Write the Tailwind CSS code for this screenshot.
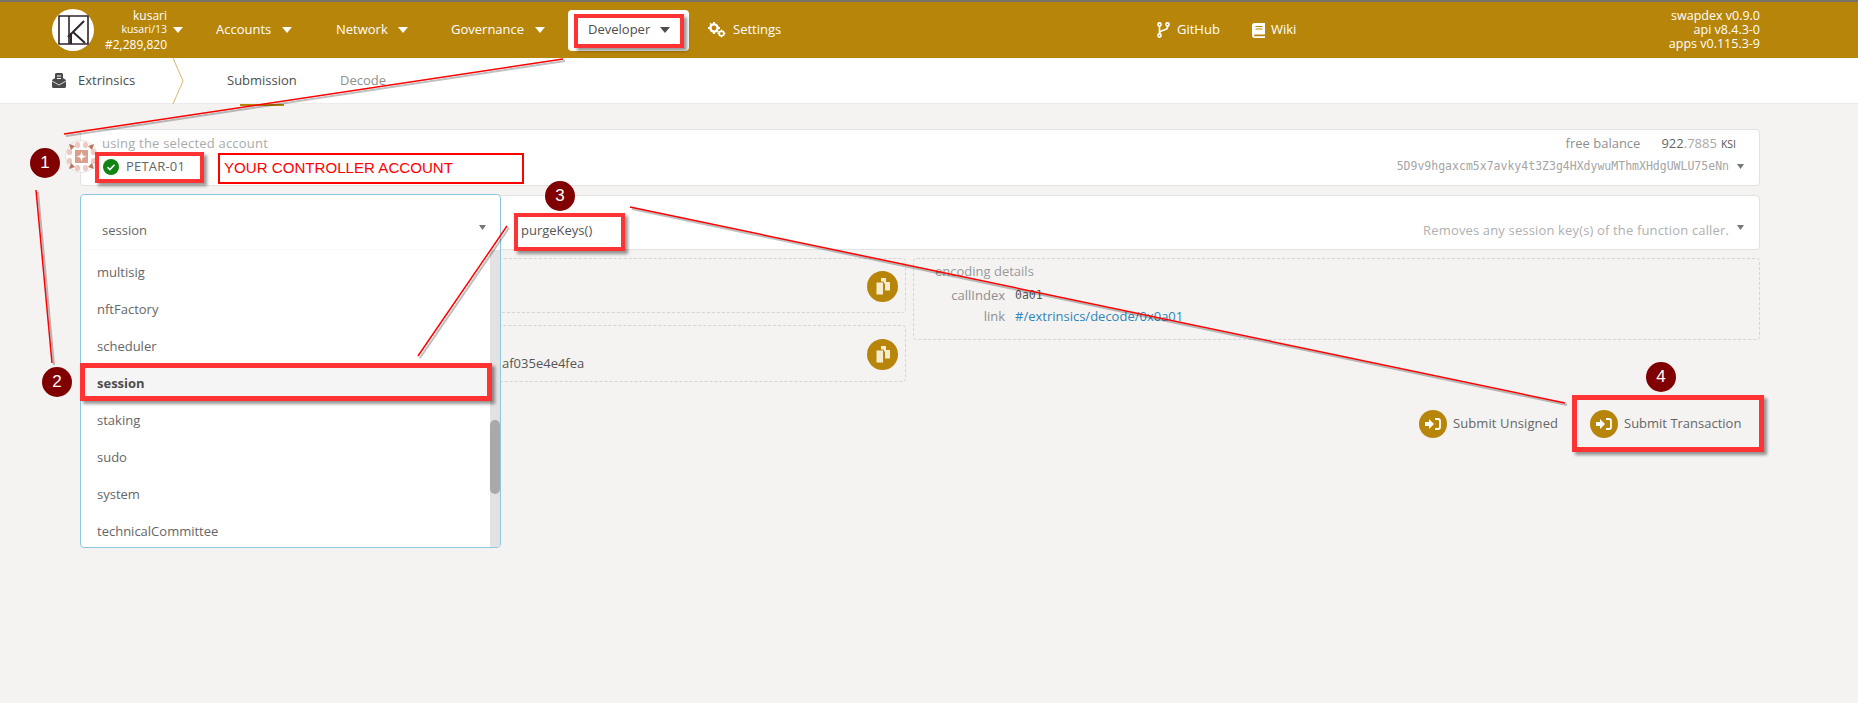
<!DOCTYPE html>
<html lang="en">
<head>
<meta charset="utf-8">
<title>Extrinsics</title>
<script src="https://cdn.jsdelivr.net/npm/@tailwindcss/browser@4"></script>
</head>
<body class="m-0 bg-[#f4f3f2] font-['Open_Sans',sans-serif] text-[#4d4d4d] overflow-hidden">
<div class="relative w-[1858px] h-[703px] overflow-hidden">

  <div class="h-[2px] bg-[#77736a]"></div>

  <!-- header -->
  <header class="h-[56px] bg-[#b7850a] flex items-center pl-[52px] pr-[98px] text-white text-[13px]">
    <div class="w-[42px] h-[42px] rounded-full bg-white flex items-center justify-center shrink-0">
      <svg width="33" height="34" viewBox="0 0 33 34" fill="none" stroke="#2f2430" stroke-width="1.6">
        <path d="M12 3H2v28h10M12 3v28M12 3h19v28H12"/>
        <path d="M14 31V20M11 24L27 8M16 19l12 11" stroke-width="2"/>
      </svg>
    </div>
    <div class="w-[73px] mt-[1px] text-right shrink-0">
      <div class="text-[12px] leading-[14px]">kusari</div>
      <div class="text-[10.500px] leading-[13px]">kusari/13</div>
      <div class="text-[12px] leading-[17px]">#2,289,820</div>
    </div>
    <svg class="ml-[6px] shrink-0" width="10" height="6" viewBox="0 0 10 6"><path d="M0 0h10L5 6z" fill="#fff"/></svg>

    <span class="ml-[33px] w-[56px] whitespace-nowrap">Accounts</span>
    <svg class="ml-[10px] shrink-0" width="10" height="6" viewBox="0 0 10 6"><path d="M0 0h10L5 6z" fill="#fff"/></svg>
    <span class="ml-[44px] w-[52px] whitespace-nowrap">Network</span>
    <svg class="ml-[10px] shrink-0" width="10" height="6" viewBox="0 0 10 6"><path d="M0 0h10L5 6z" fill="#fff"/></svg>
    <span class="ml-[43px] w-[73px] whitespace-nowrap">Governance</span>
    <svg class="ml-[11px] shrink-0" width="10" height="6" viewBox="0 0 10 6"><path d="M0 0h10L5 6z" fill="#fff"/></svg>

    <div class="ml-[23px] w-[121px] h-[41px] bg-white rounded-[4px] flex items-center pl-[20px] text-[#4d4d4d]">
      <span class="w-[63px] whitespace-nowrap">Developer</span>
      <svg class="ml-[9px] shrink-0" width="10" height="6" viewBox="0 0 10 6"><path d="M0 0h10L5 6z" fill="#4d4d4d"/></svg>
    </div>

    <svg class="ml-[19px] shrink-0" width="18" height="16" viewBox="0 0 18 16" fill="#fff">
      <circle cx="6" cy="6" r="3.6" fill="none" stroke="#fff" stroke-width="2.4"/>
      <path d="M5 0h2v2H5zM5 10h2v2H5zM0 5h2v2H0zM10 5h2v2h-2zM1.500 1.500l1.400-.6 1 1.400-1.400 1zM8.500 9l1.400-.6 1 1.400-1.400 1z"/>
      <circle cx="13.500" cy="11.500" r="2.400" fill="none" stroke="#fff" stroke-width="1.800"/>
      <path d="M13 7.500h1v1.500h-1zM13 14h1v1.600h-1zM9.500 11h1.500v1H9.500zM16 11h1.600v1H16z"/>
    </svg>
    <span class="ml-[7px] w-[50px] whitespace-nowrap">Settings</span>

    <svg class="ml-[374px] shrink-0" width="13" height="16" viewBox="0 0 13 16" fill="none" stroke="#fff" stroke-width="1.600">
      <circle cx="2.500" cy="2.500" r="1.600"/><circle cx="10.500" cy="2.500" r="1.600"/><circle cx="2.500" cy="13.500" r="1.600"/>
      <path d="M2.500 4v8M10.500 4v1.500c0 3-8 2.500-8 5.500"/>
    </svg>
    <span class="ml-[7px] w-[43px] whitespace-nowrap">GitHub</span>
    <svg class="ml-[32px] shrink-0" width="13" height="15" viewBox="0 0 13 15">
      <path d="M2.500 0H13v11.500H2.800c-1 0-1 1.700 0 1.700H13V15H2.500C1 15 0 14 0 12.600V2.500C0 1 1 0 2.500 0z" fill="#fff"/>
      <path d="M3.500 3.500h7M3.500 6h7" stroke="#b7850a" stroke-width="1"/>
    </svg>
    <span class="ml-[6px] whitespace-nowrap">Wiki</span>

    <div class="ml-auto text-right text-[12.500px] leading-[14px]">
      <div>swapdex v0.9.0</div>
      <div>api v8.4.3-0</div>
      <div>apps v0.115.3-9</div>
    </div>
  </header>

  <!-- tabs -->
  <nav class="relative h-[46px] bg-white border-b border-[#ebebeb] flex items-center pl-[52px] text-[13px]">
    <svg class="shrink-0" width="14" height="15" viewBox="0 0 14 15">
      <path d="M3 1.500C3 .7 3.700 0 4.500 0h5C10.300 0 11 .7 11 1.500V5l3 2v6.500c0 .8-.7 1.500-1.500 1.500h-11C.7 15 0 14.300 0 13.500V7l3-2z" fill="#4a4a4a"/>
      <path d="M5 3h4M5 5.500h4" stroke="#fff" stroke-width="1.200"/>
      <path d="M0 8l7 4 7-4" stroke="#fff" stroke-width=".8" fill="none"/>
    </svg>
    <span class="ml-[12px] w-[56px] whitespace-nowrap">Extrinsics</span>
    <svg class="ml-[38px] shrink-0" width="12" height="46" viewBox="0 0 12 46" fill="none" stroke="#d9b76a" stroke-width="1"><path d="M1 0l10 23L1 46"/></svg>
    <div class="relative ml-[43px] w-[70px] h-full flex items-center">
      <span class="whitespace-nowrap">Submission</span>
      <span class="absolute left-[13px] -bottom-[3px] w-[44px] h-[2px] bg-[#b7850a]"></span>
    </div>
    <span class="ml-[43px] text-[#8f8f8f] whitespace-nowrap">Decode</span>
  </nav>

  <!-- main -->
  <main class="pl-[80px] pr-[98px] pt-[25px] text-[13px]">

    <section class="relative h-[57px] bg-white border border-[#e2e2e0] rounded-[4px] flex justify-between pl-[21px] pr-[15px]">
      <div class="absolute -left-[16px] top-[10px] w-[33px] h-[33px] opacity-80">
        <svg width="33" height="33" viewBox="0 0 33 33">
          <circle cx="16.500" cy="16.500" r="16" fill="#fff" stroke="#dedcdc"/>
          <g fill="#eebbae">
            <rect x="10" y="2" width="5" height="6" rx="2.500"/><rect x="18" y="2" width="5" height="6" rx="2.500"/>
            <rect x="2" y="9" width="5" height="6" rx="2.500"/><rect x="26" y="9" width="5" height="6" rx="2.500"/>
            <rect x="2" y="18" width="5" height="6" rx="2.500"/><rect x="26" y="18" width="5" height="6" rx="2.500"/>
            <rect x="10" y="25" width="5" height="6" rx="2.500"/><rect x="18" y="25" width="5" height="6" rx="2.500"/>
          </g>
          <rect x="10" y="10" width="13" height="13" fill="#d08a72"/>
          <path d="M16.500 11.500l1.300 3.700 3.700 1.300-3.700 1.300-1.300 3.700-1.300-3.700-3.700-1.300 3.700-1.300z" fill="#fff"/>
          <path d="M4 4l6 2-4 4zM29 4l-6 2 4 4zM4 29l6-2-4-4zM29 29l-6-2 4-4z" fill="#a9573f"/>
        </svg>
      </div>
      <div class="pt-[4px]">
        <div class="text-[#aaa] text-[13px] leading-[18px] tracking-[0.2px]">using the selected account</div>
        <div class="flex items-center mt-[5px] ml-[1px]">
          <svg width="16" height="16" viewBox="0 0 16 16"><circle cx="8" cy="8" r="8" fill="#138413"/><path d="M4.500 8.200l2.400 2.400 4.600-4.800" fill="none" stroke="#fff" stroke-width="1.600"/></svg>
          <span class="ml-[7px] text-[13px] text-[#666] tracking-[0.2px]">PETAR-01</span>
        </div>
      </div>
      <div class="pt-[4px] text-right">
        <div class="flex justify-end items-baseline pr-[8px] leading-[18px]">
          <span class="text-[#8f8f8f]">free balance</span>
          <span class="ml-[21px] text-[#666]">922</span><span class="text-[#aaa]">.7885</span><span class="ml-[4px] text-[10.500px] text-[#555]">KSI</span>
        </div>
        <div class="flex items-center justify-end mt-[5px]">
          <span class="font-['DejaVu_Sans_Mono',monospace] text-[11.500px] text-[#a5a5a5]">5D9v9hgaxcm5x7avky4t3Z3g4HXdywuMThmXHdgUWLU75eNn</span>
          <svg class="ml-[8px]" width="7" height="5" viewBox="0 0 7 5"><path d="M0 0h7L3.500 5z" fill="#777"/></svg>
        </div>
      </div>
    </section>

    <section class="relative h-[55px] mt-[9px] bg-white border border-[#e2e2e0] rounded-[4px] flex items-center justify-end pr-[15px] pt-[17px]">
      <span class="absolute left-[440px] top-[35px] -translate-y-1/2 text-[#555] whitespace-nowrap">purgeKeys()</span>
      <span class="text-[#b0b0b0] tracking-[0.15px] whitespace-nowrap">Removes any session key(s) of the function caller.</span>
      <svg class="ml-[8px] -mt-[7px]" width="7" height="5" viewBox="0 0 7 5"><path d="M0 0h7L3.500 5z" fill="#777"/></svg>

      <!-- open dropdown -->
      <div class="absolute -left-px -top-[2px] z-10 w-[421px] h-[354px] bg-white border border-[#8ec8e0] rounded-[4px] flex flex-col overflow-hidden">
        <div class="h-[55px] shrink-0 flex items-center justify-between pt-[18px] pl-[21px] pr-[14px] border-b border-[#f8f8f8]">
          <span class="text-[#666]">session</span>
          <svg class="-mt-[8px]" width="7" height="5" viewBox="0 0 7 5"><path d="M0 0h7L3.500 5z" fill="#777"/></svg>
        </div>
        <div class="flex-1 flex min-h-0">
          <ul class="flex-1 text-[#666] pt-[4px]">
            <li class="h-[37px] flex items-center pl-[16px]">multisig</li>
            <li class="h-[37px] flex items-center pl-[16px]">nftFactory</li>
            <li class="h-[37px] flex items-center pl-[16px]">scheduler</li>
            <li class="h-[37px] flex items-center pl-[16px] bg-[#f5f5f5] font-bold text-[#4d4d4d]">session</li>
            <li class="h-[37px] flex items-center pl-[16px]">staking</li>
            <li class="h-[37px] flex items-center pl-[16px]">sudo</li>
            <li class="h-[37px] flex items-center pl-[16px]">system</li>
            <li class="h-[37px] flex items-center pl-[16px]">technicalCommittee</li>
          </ul>
          <div class="w-[10px] bg-[#e2e2e2] relative">
            <div class="absolute top-[170px] left-0 w-[10px] h-[74px] rounded-[5px] bg-[#a9a9a9]"></div>
          </div>
        </div>
      </div>
    </section>

    <div class="flex gap-[7px] mt-[8px]">
      <div class="w-[826px] flex flex-col gap-[12px]">
        <div class="h-[55px] border border-dashed border-[#d4d4d4] rounded-[4px] relative">
          <div class="absolute right-[7px] top-[12px] w-[31px] h-[31px] rounded-full bg-[#b7850a] flex items-center justify-center">
            <svg width="14" height="17" viewBox="0 0 14 17"><path d="M5 0h5v4h4v8.500H9V5.500H5z" fill="#f5ecd0"/><path d="M0 4h7.500v13H0z" fill="#f5ecd0" stroke="#b7850a" stroke-width="1"/></svg>
          </div>
        </div>
        <div class="h-[57px] border border-dashed border-[#d4d4d4] rounded-[4px] relative">
          <span class="absolute left-[421px] top-[27px] text-[#555] leading-[20px]">af035e4e4fea</span>
          <div class="absolute right-[7px] top-[13px] w-[31px] h-[31px] rounded-full bg-[#b7850a] flex items-center justify-center">
            <svg width="14" height="17" viewBox="0 0 14 17"><path d="M5 0h5v4h4v8.500H9V5.500H5z" fill="#f5ecd0"/><path d="M0 4h7.500v13H0z" fill="#f5ecd0" stroke="#b7850a" stroke-width="1"/></svg>
          </div>
        </div>
      </div>
      <div class="flex-1 h-[82px] border border-dashed border-[#d4d4d4] rounded-[4px] pl-[21px] pt-[3px]">
        <div class="text-[#9a9a9a] leading-[18px]">encoding details</div>
        <div class="flex items-center mt-[6px] leading-[18px]">
          <span class="w-[70px] text-right text-[#8f8f8f]">callIndex</span>
          <span class="ml-[10px] font-['DejaVu_Sans_Mono',monospace] text-[11.500px] text-[#555]">0a01</span>
        </div>
        <div class="flex items-center mt-[3px] leading-[18px]">
          <span class="w-[70px] text-right text-[#8f8f8f]">link</span>
          <span class="ml-[10px] text-[#2f86b5]">#/extrinsics/decode/0x0a01</span>
        </div>
      </div>
    </div>

    <div class="flex justify-end items-center mt-[28px] pr-[19px]">
      <div class="flex items-center">
        <div class="w-[28px] h-[28px] rounded-full bg-[#b7850a] flex items-center justify-center">
          <svg width="16" height="12" viewBox="0 0 16 12"><path d="M0 4h4V1l5 5-5 5V8H0z" fill="#fff"/><path d="M10 1h3a2 2 0 0 1 2 2v6a2 2 0 0 1-2 2h-3" fill="none" stroke="#fff" stroke-width="1.800"/></svg>
        </div>
        <span class="ml-[6px] w-[106px] text-[#666] whitespace-nowrap tracking-[0.1px]">Submit Unsigned</span>
      </div>
      <div class="flex items-center ml-[31px]">
        <div class="w-[28px] h-[28px] rounded-full bg-[#b7850a] flex items-center justify-center">
          <svg width="16" height="12" viewBox="0 0 16 12"><path d="M0 4h4V1l5 5-5 5V8H0z" fill="#fff"/><path d="M10 1h3a2 2 0 0 1 2 2v6a2 2 0 0 1-2 2h-3" fill="none" stroke="#fff" stroke-width="1.800"/></svg>
        </div>
        <span class="ml-[6px] w-[117px] text-[#666] whitespace-nowrap">Submit Transaction</span>
      </div>
    </div>
  </main>

  <!-- annotations drawn over the screenshot -->
  <div class="absolute inset-0 z-20 pointer-events-none">
    <svg class="absolute inset-0" width="1858" height="703" viewBox="0 0 1858 703" fill="none">
      <g stroke="#000" stroke-opacity=".25" stroke-width="2">
        <path d="M565 61L66 136M38 192l16 173M509 228L420 358M632 209L1567 405"/>
      </g>
      <g stroke="#f00" stroke-width="1.500">
        <path d="M563 59L64 134M36 190l16 173M507 226L418 356M630 207L1565 403"/>
      </g>
    </svg>

    <div class="absolute left-[574px] top-[14px] w-[110px] h-[34px] border-[4px] border-[#ff3333] shadow-[3px_3px_3px_rgba(0,0,0,0.4)]"></div>
    <div class="absolute left-[95px] top-[152px] w-[109px] h-[31px] border-[4px] border-[#ff3333] shadow-[3px_3px_3px_rgba(0,0,0,0.4)]"></div>
    <div class="absolute left-[218px] top-[153px] w-[306px] h-[31px] border-[2px] border-[#f00] flex items-center pl-[4px] text-[#f00] text-[15.100px] font-['Liberation_Sans',sans-serif] whitespace-nowrap">YOUR CONTROLLER ACCOUNT</div>
    <div class="absolute left-[514px] top-[213px] w-[111px] h-[38px] border-[4px] border-[#ff3333] shadow-[3px_3px_3px_rgba(0,0,0,0.4)]"></div>
    <div class="absolute left-[80px] top-[363px] w-[412px] h-[38px] border-[5px] border-[#ff3333] shadow-[3px_3px_3px_rgba(0,0,0,0.4)]"></div>
    <div class="absolute left-[1572px] top-[395px] w-[192px] h-[57px] border-[5px] border-[#ff3333] shadow-[3px_3px_3px_rgba(0,0,0,0.4)]"></div>

    <div class="absolute left-[30px] top-[148px] w-[30px] h-[30px] rounded-full bg-[#800000] text-white text-[17px] flex items-center justify-center font-['Liberation_Sans',sans-serif]">1</div>
    <div class="absolute left-[42px] top-[367px] w-[30px] h-[30px] rounded-full bg-[#800000] text-white text-[17px] flex items-center justify-center font-['Liberation_Sans',sans-serif]">2</div>
    <div class="absolute left-[545px] top-[181px] w-[30px] h-[30px] rounded-full bg-[#800000] text-white text-[17px] flex items-center justify-center font-['Liberation_Sans',sans-serif]">3</div>
    <div class="absolute left-[1646px] top-[362px] w-[30px] h-[30px] rounded-full bg-[#800000] text-white text-[17px] flex items-center justify-center font-['Liberation_Sans',sans-serif]">4</div>
  </div>
</div>
</body>
</html>
